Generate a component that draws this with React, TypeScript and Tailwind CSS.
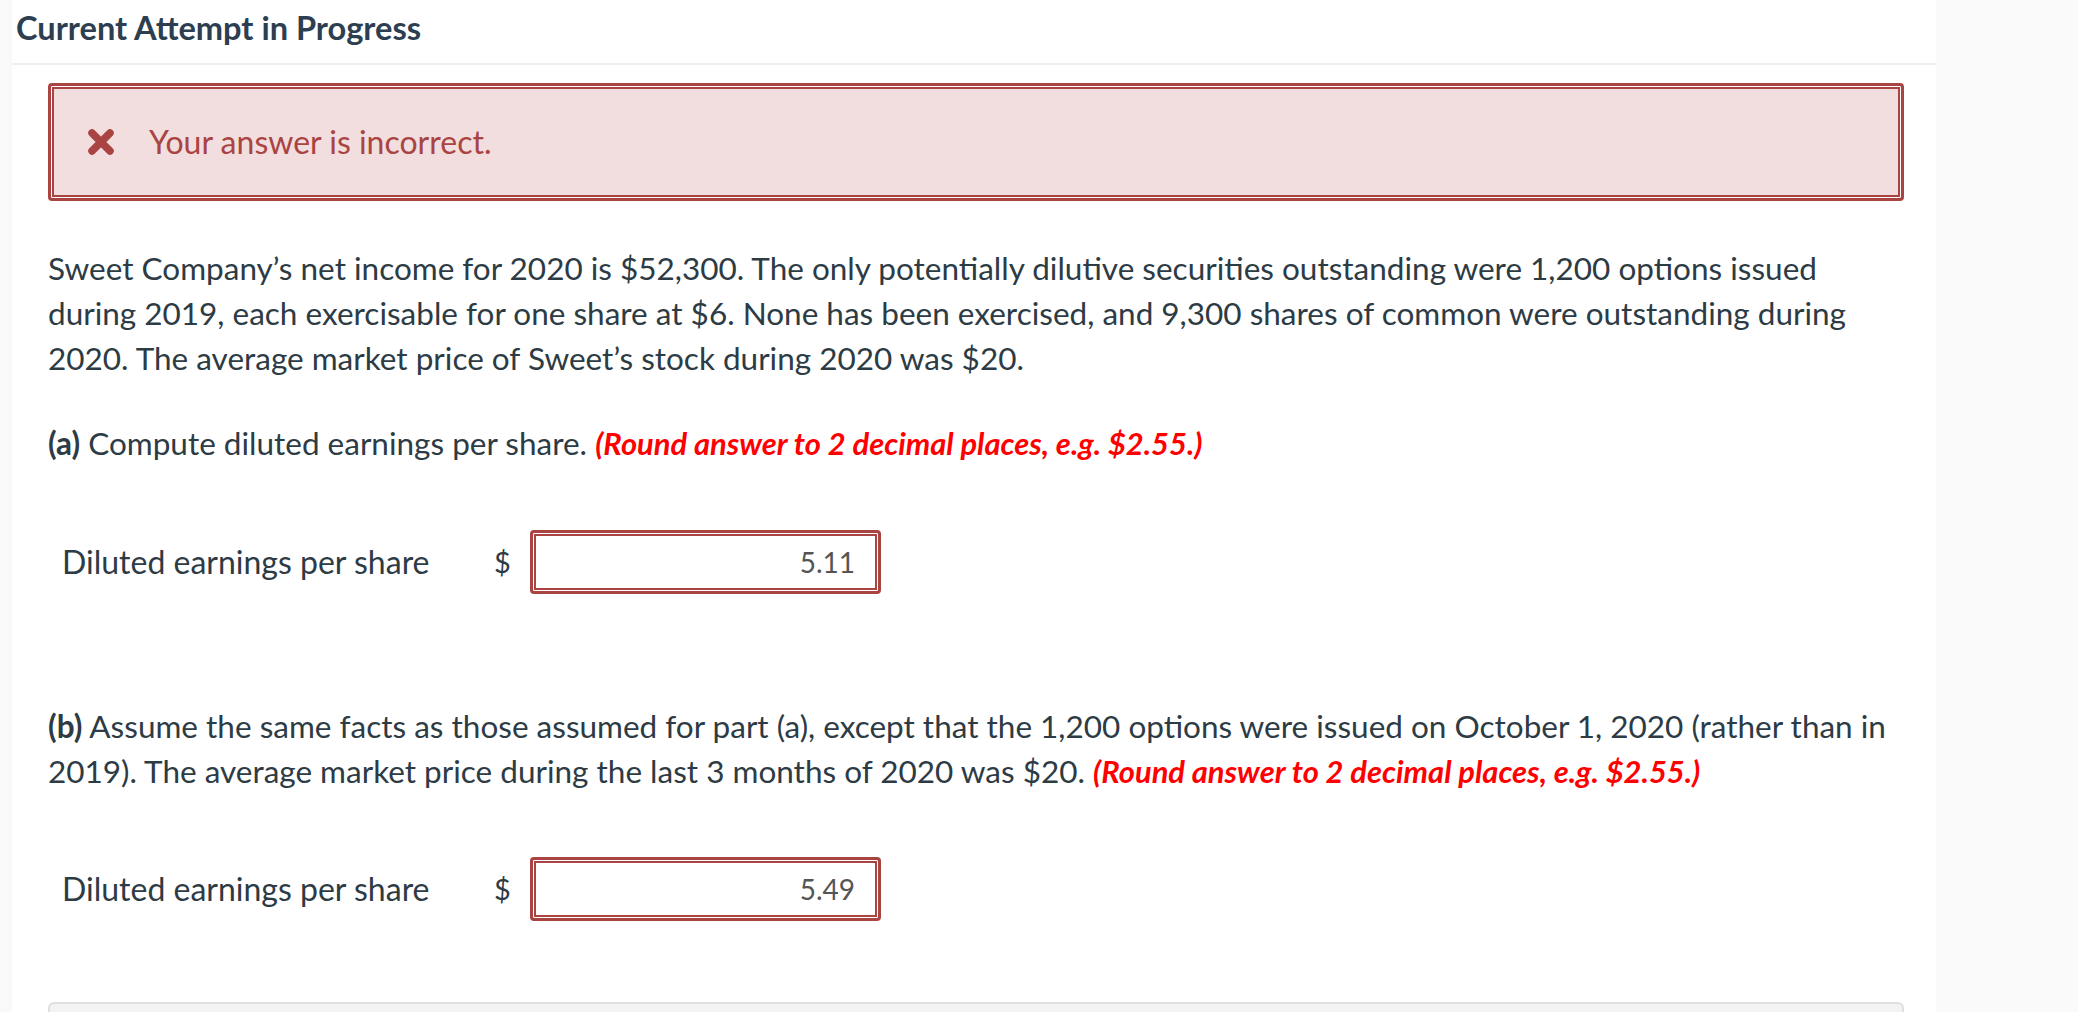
function CrossIcon() {
  return (
    <svg viewBox="0 0 28 28" className="w-[28px] h-[28px]" aria-hidden="true">
      <path d="M5 5 L23 23 M23 5 L5 23" stroke="#a94442" strokeWidth="7.5" strokeLinecap="round" fill="none" />
    </svg>
  );
}

function AnswerRow({ value }: { value: string }) {
  return (
    <div className="flex items-center h-[64px]">
      <div className="w-[432px] pl-[14px] text-[32px] leading-[40px]">Diluted earnings per share</div>
      <span className="ml-[14px] w-[16px] text-[29px] leading-[40px]">$</span>
      <div className="ml-[20px] w-[351px] h-[64px] rounded-[4px] border-[3px] border-[#a94442] bg-white shadow-[inset_0_0_0_1px_#ffffff,inset_0_0_0_3px_#a94442] flex items-center justify-end pr-[23px]">
        <span className="text-[28px] leading-[36px] text-[#555555]">{value}</span>
      </div>
    </div>
  );
}

export default function App() {
  return (
    <div
      className="flex min-h-screen text-[#2d3b45]"
      style={{ fontFamily: "Lato, 'Open Sans', sans-serif" }}
    >
      <div className="w-[12px] bg-[#f9f9f9]" />
      <main className="w-[1924px] bg-white">
        {/* Header */}
        <header className="h-[65px] border-b-2 border-[#efefef] pl-[4px] flex items-center">
          <h1 className="text-[32.6px] leading-[40px] font-bold text-[#2c3e50] -mt-[8px]">Current Attempt in Progress</h1>
        </header>

        <div className="pl-[36px] pr-[32px]">
          {/* Feedback */}
          <div className="mt-[18px] h-[118px] rounded-[4px] border-[3px] border-[#a94442] bg-[#f2dede] shadow-[inset_0_0_0_1px_#ffffff,inset_0_0_0_3px_#a94442] flex items-center pl-[36px] text-[#a94442]">
            <CrossIcon />
            <span className="ml-[34px] text-[32px] leading-[40px]">Your answer is incorrect.</span>
          </div>

          {/* Question */}
          <p className="mt-[45px] text-[31.5px] leading-[45px]">
            Sweet Company’s net income for 2020 is $52,300. The only potentially dilutive securities outstanding were 1,200 options issued during 2019, each exercisable for one share at $6. None has been exercised, and 9,300 shares of common were outstanding during 2020. The average market price of Sweet’s stock during 2020 was $20.
          </p>

          <p className="mt-[40px] text-[31.5px] leading-[45px]">
            <span className="font-bold">(a)</span> Compute diluted earnings per share.{" "}
            <span className="font-bold italic text-[30.9px] text-[#ff0000]">(Round answer to 2 decimal places, e.g. $2.55.)</span>
          </p>

          <div className="mt-[64px]">
            <AnswerRow value="5.11" />
          </div>

          <p className="mt-[110px] text-[31.5px] leading-[45px]">
            <span className="font-bold">(b)</span> Assume the same facts as those assumed for part (a), except that the 1,200 options were issued on October 1, 2020 (rather than in 2019). The average market price during the last 3 months of 2020 was $20.{" "}
            <span className="font-bold italic text-[30.9px] text-[#ff0000]">(Round answer to 2 decimal places, e.g. $2.55.)</span>
          </p>

          <div className="mt-[63px]">
            <AnswerRow value="5.49" />
          </div>

          <div className="mt-[81px] h-[60px] rounded-t-[6px] border-2 border-[#e0e0e0] bg-[#f3f3f3]" />
        </div>
      </main>
      <div className="flex-1 bg-[#fafafa]" />
    </div>
  );
}
